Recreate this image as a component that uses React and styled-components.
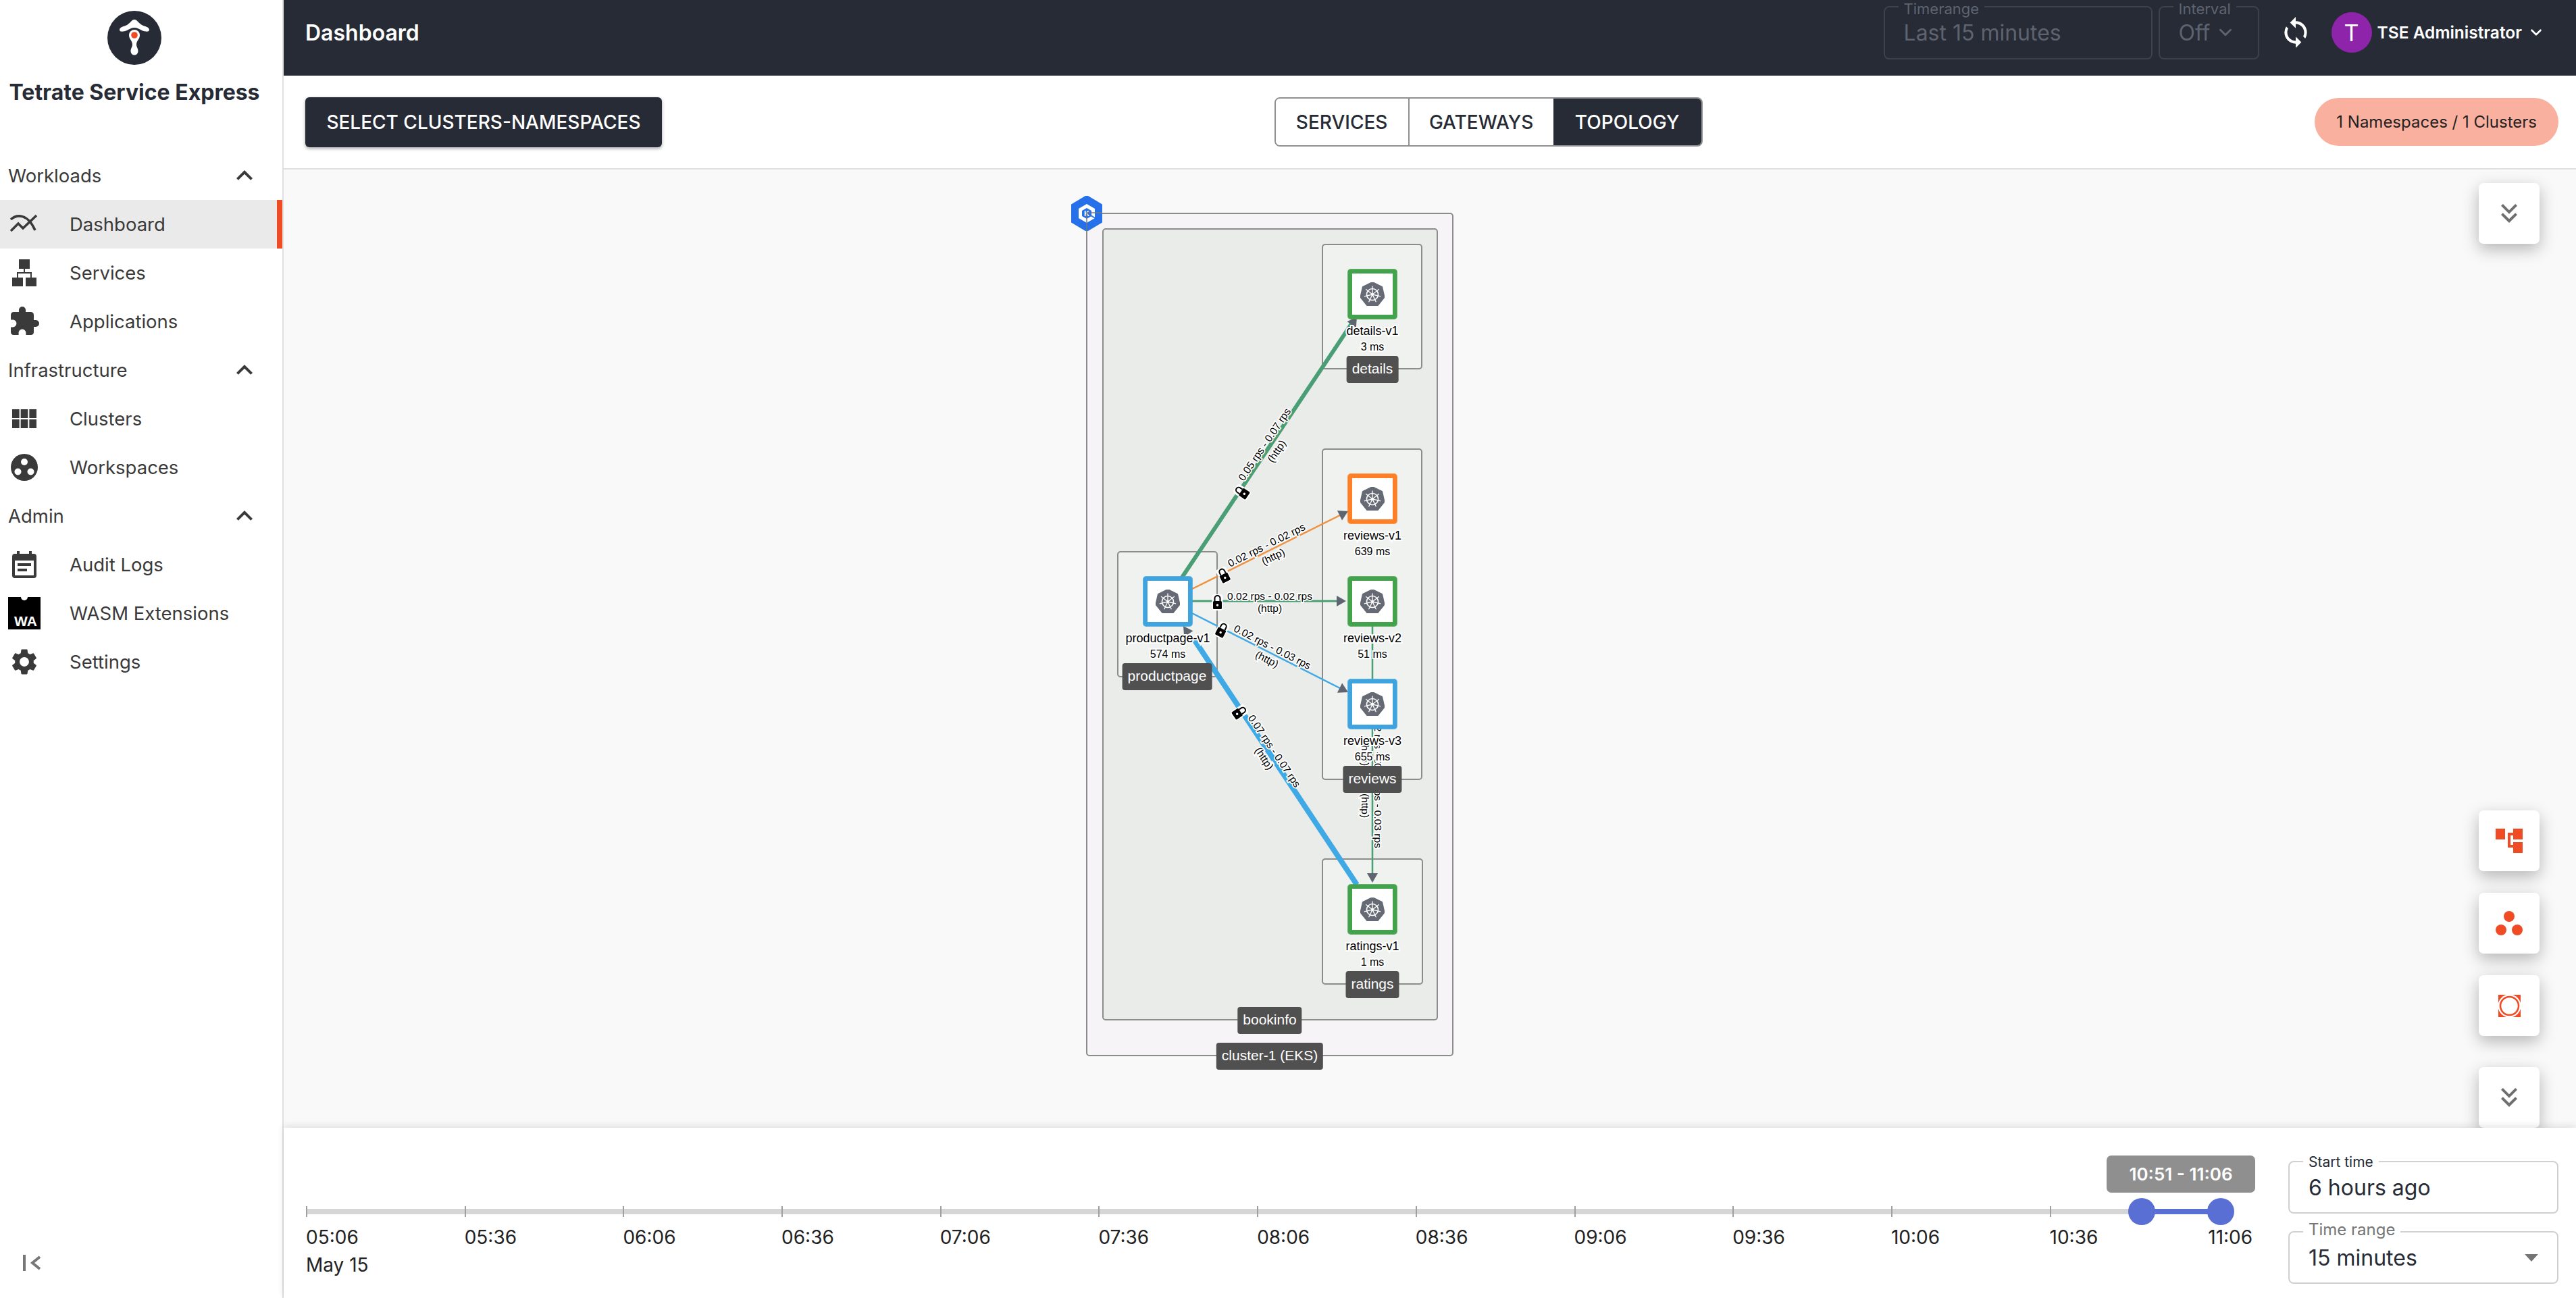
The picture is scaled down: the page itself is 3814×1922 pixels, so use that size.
import styled, { createGlobalStyle } from 'styled-components'
import { MdExpandLess, MdExtension, MdSettings, MdViewModule, MdSync, MdKeyboardDoubleArrowDown } from 'react-icons/md'
import { ChevronDown } from 'lucide-react'

const ORIGIN_X = 1608
const ORIGIN_Y = 315
const TICK_WIDTH = 234.7

const GlobalStyle = createGlobalStyle`
    html, body { margin: 0; padding: 0; background: #fff; }
    * { box-sizing: border-box; }
    body { font-family: Inter, "Liberation Sans", sans-serif; color: #262b35; }
`

//Layout
const Page = styled.div`
    display: grid;
    grid-template-columns: 420px 1fr;
    width: 3814px;
    height: 1922px;
    overflow: hidden;
`

const Main = styled.main`
    display: flex;
    flex-direction: column;
    min-width: 0;
`

//Sidebar
const Sidebar = styled.aside`
    position: relative;
    border-right: 2px solid #e0e0e0;
    background: #fff;
`

const Brand = styled.div`
    display: flex;
    flex-direction: column;
    align-items: center;
    height: 224px;
    padding: 16px 20px 0 0;
`

const BrandName = styled.div`
    margin-top: 21px;
    font-size: 32px;
    font-weight: 700;
    line-height: 40px;
    white-space: nowrap;
`

const GroupTitle = styled.div`
    display: flex;
    align-items: center;
    justify-content: space-between;
    height: 72px;
    padding: 0 32px 0 12px;
    font-size: 27.5px;
    color: #3a3a3a;
`

const NavItem = styled.div`
    display: flex;
    align-items: center;
    height: 72px;
    padding-left: 12px;
    font-size: 27.5px;
    color: #3a3a3a;
    background: ${p => (p.$active ? '#eaeaea' : 'transparent')};
    border-right: 8px solid ${p => (p.$active ? '#ef4b24' : 'transparent')};
`

const NavIcon = styled.span`
    display: flex;
    align-items: center;
    justify-content: center;
    width: 48px;
    margin-right: 43px;
    color: #3a3a3a;
`

const WasmBadge = styled.span`
    position: relative;
    display: flex;
    align-items: flex-end;
    justify-content: center;
    width: 48px;
    height: 48px;
    background: #000;
    color: #fff;
    font-family: "Liberation Sans", sans-serif;
    font-size: 21px;
    font-weight: 700;
    padding: 0 0 1px 4px;
    line-height: 22px;

    &::before {
        content: '';
        position: absolute;
        top: -5px;
        left: 19px;
        width: 10px;
        height: 10px;
        border-radius: 50%;
        background: #fff;
    }
`

const Collapse = styled.div`
    position: absolute;
    left: 34px;
    bottom: 40px;
    display: flex;
`

//Header
const Header = styled.header`
    display: flex;
    align-items: center;
    height: 112px;
    padding: 0 0 16px 32px;
    background: #262b35;
    color: #fff;
`

const PageTitle = styled.h1`
    flex: 1;
    margin: 0;
    font-size: 32px;
    font-weight: 600;
`

const HeaderField = styled.div`
    position: relative;
    display: flex;
    align-items: center;
    gap: 8px;
    width: ${p => p.$width}px;
    height: 79px;
    margin-right: 9px;
    padding: 0 0 0 28px;
    border: 2px solid #3c414c;
    border-radius: 8px;
    color: #5e6370;
    font-size: 32px;
`

const HeaderLegend = styled.span`
    position: absolute;
    top: -9px;
    left: 20px;
    padding: 0 8px;
    background: #262b35;
    font-size: 22px;
    line-height: 22px;
`

const RefreshButton = styled.div`
    display: flex;
    margin: 0 28px 0 20px;
    color: #fff;
`

const Avatar = styled.div`
    display: flex;
    align-items: center;
    justify-content: center;
    width: 60px;
    height: 60px;
    margin-right: 8px;
    border-radius: 50%;
    background: #8e24aa;
    font-size: 34px;
`

const UserName = styled.div`
    display: flex;
    align-items: center;
    gap: 8px;
    margin-right: 46px;
    font-size: 24.5px;
    font-weight: 600;
    white-space: nowrap;
`

//Toolbar
const Toolbar = styled.div`
    display: flex;
    align-items: center;
    justify-content: space-between;
    height: 139px;
    padding: 0 26px 0 32px;
    border-bottom: 2px solid #e0e0e0;
`

const SelectButton = styled.button`
    width: 528px;
    height: 74px;
    padding: 0;
    border: 0;
    border-radius: 6px;
    background: #262b35;
    box-shadow: 0 2px 5px rgba(0, 0, 0, .35);
    color: #fff;
    font: 500 28px Inter, sans-serif;
`

const Tabs = styled.div`
    display: flex;
    height: 73px;
    border: 2px solid #909090;
    border-radius: 8px;
    overflow: hidden;
`

const Tab = styled.div`
    display: flex;
    align-items: center;
    justify-content: center;
    width: ${p => p.$width}px;
    border-left: ${p => (p.$first || p.$active ? 0 : '2px solid #909090')};
    background: ${p => (p.$active ? '#262b35' : '#fff')};
    color: ${p => (p.$active ? '#fff' : '#262b35')};
    font-size: 28px;
    font-weight: 500;
`

const Pill = styled.div`
    display: flex;
    align-items: center;
    height: 71px;
    padding: 0 32px;
    border-radius: 36px;
    background: #f9b09e;
    color: #222;
    font-size: 24px;
    white-space: nowrap;
`

//Topology canvas
const Canvas = styled.section`
    position: relative;
    flex: 1;
    background: #f9f9f9;
    overflow: hidden;
    padding: 64px 0 0 1188px;
`

const Graph = styled.div`
    position: relative;
    width: 544px;
    height: 1249px;
`

const GroupBox = styled.div`
    position: absolute;
    left: ${p => p.$x1 - ORIGIN_X}px;
    top: ${p => p.$y1 - ORIGIN_Y}px;
    width: ${p => p.$x2 - p.$x1}px;
    height: ${p => p.$y2 - p.$y1}px;
    background: ${p => p.$fill};
    border: 2px solid #8c8c8c;
    border-radius: 5px;
`

const EdgeLayer = styled.svg`
    position: absolute;
    inset: 0;
    width: 544px;
    height: 1249px;
    overflow: visible;
`

const EdgeLabel = styled.text`
    font-family: "Liberation Sans", Arial, sans-serif;
    font-size: 15.5px;
    fill: #000;
    stroke: #fff;
    stroke-width: 3.5px;
    paint-order: stroke;
    text-anchor: middle;
    dominant-baseline: central;
`

const Node = styled.div`
    position: absolute;
    left: ${p => p.$cx - ORIGIN_X - 100}px;
    top: ${p => p.$top - ORIGIN_Y}px;
    display: flex;
    flex-direction: column;
    align-items: center;
    width: 200px;
`

const NodeBox = styled.div`
    display: flex;
    align-items: center;
    justify-content: center;
    width: 72px;
    height: 73px;
    margin-bottom: 6px;
    border: 6px solid ${p => p.$color};
    border-radius: 4px;
    background: #fff;
    box-shadow: 0 0 0 1px ${p => p.$color}cc;
`

const NodeText = styled.div`
    height: 24px;
    font-family: "Liberation Sans", Arial, sans-serif;
    font-size: ${p => p.$size}px;
    line-height: 24px;
    color: #000;
    white-space: nowrap;
    -webkit-text-stroke: 4px #fff;
    paint-order: stroke fill;
`

const GroupTag = styled.div`
    position: absolute;
    left: ${p => p.$cx - ORIGIN_X}px;
    top: ${p => p.$top - ORIGIN_Y}px;
    height: 40px;
    padding: 0 8px;
    transform: translateX(-50%);
    border-radius: 4px;
    background: #505050;
    color: #fff;
    font-family: "Liberation Sans", Arial, sans-serif;
    font-size: 21px;
    line-height: 38px;
    white-space: nowrap;
`

const ClusterBadge = styled.svg`
    position: absolute;
    left: -22px;
    top: -25px;
    width: 46px;
    height: 52px;
`

const BadgeLetter = styled.text`
    font-family: "Liberation Sans", Arial, sans-serif;
    font-size: 11px;
    font-weight: 700;
    fill: #fff;
    text-anchor: middle;
`

const FloatButton = styled.div`
    position: absolute;
    left: ${3670 - 420}px;
    top: ${p => p.$top - 251}px;
    display: flex;
    align-items: center;
    justify-content: center;
    width: 90px;
    height: 90px;
    border-radius: 7px;
    background: #fff;
    box-shadow: 0 8px 24px rgba(0, 0, 0, .28);
    color: #6f6f6f;
`

//Time panel
const TimePanel = styled.footer`
    position: relative;
    display: flex;
    height: 252px;
    padding: 49px 26px 0 33px;
    background: #fff;
    box-shadow: 0 -3px 10px rgba(0, 0, 0, .1);
`

const Timeline = styled.div`
    position: relative;
    display: flex;
    align-items: flex-start;
    width: 2935px;
    padding-top: 67px;

    &::before {
        content: '';
        position: absolute;
        left: 0;
        top: 71px;
        width: 2835px;
        height: 8px;
        background: #d6d6d6;
    }
`

const Tick = styled.div`
    position: relative;
    flex: 0 0 ${TICK_WIDTH}px;
    font-size: 28px;
    line-height: 34px;
    color: #222;

    &::before {
        content: '';
        display: block;
        width: 2px;
        height: 16px;
        margin-bottom: 13px;
        background: #a0a0a0;
    }
`

const DateLabel = styled.div`
    margin-top: 7px;
`

const ActiveRange = styled.div`
    position: absolute;
    left: 2718px;
    top: 71px;
    width: 117px;
    height: 8px;
    background: #5a6fd3;
`

const Handle = styled.div`
    position: absolute;
    left: ${p => p.$left}px;
    top: 55px;
    width: 40px;
    height: 40px;
    border-radius: 50%;
    background: #5a6fd3;
`

const RangeTip = styled.div`
    position: absolute;
    left: 2666px;
    top: -8px;
    display: flex;
    align-items: center;
    justify-content: center;
    width: 220px;
    height: 55px;
    border-radius: 7px;
    background: #8f8f8f;
    color: #fff;
    font-size: 26px;
    font-weight: 600;
`

const Fields = styled.div`
    display: flex;
    flex-direction: column;
    gap: 26px;
    width: 400px;
`

const Field = styled.div`
    position: relative;
    display: flex;
    align-items: center;
    justify-content: space-between;
    height: 78px;
    padding: 0 28px 0 28px;
    border: 2px solid #d0d0d0;
    border-radius: 8px;
    font-size: 32px;
    color: #262b35;
`

const FieldLegend = styled.span`
    position: absolute;
    left: 20px;
    top: ${p => (p.$muted ? -17 : -13)}px;
    padding: 0 8px;
    background: #fff;
    font-size: ${p => (p.$muted ? 24 : 21)}px;
    line-height: 26px;
    color: ${p => (p.$muted ? '#757575' : '#262b35')};
`

const Caret = styled.span`
    width: 0;
    height: 0;
    border-left: 10px solid transparent;
    border-right: 10px solid transparent;
    border-top: 11px solid #757575;
`

//Drawn icons
const Logo = () => (
    <svg width="80" height="80" viewBox="0 0 80 80">
        <circle cx="40" cy="40" r="40" fill="#262b35" />
        <path d="M40 13 C44 13 46 18 51 21 C55 23 62 24 62 28 C62 32 56 31 51 29 C47 27 44 25 40 25 C36 25 33 27 29 29 C24 31 18 32 18 28 C18 24 25 23 29 21 C34 18 36 13 40 13 Z" fill="#fff" />
        <path d="M32 36 A8 8 0 0 1 48 36 C48 42 43 44 43 50 C43 54 45.5 55 45.5 60 A5.5 5.5 0 0 1 34.5 60 C34.5 55 37 54 37 50 C37 44 32 42 32 36 Z" fill="#fff" />
        <circle cx="40" cy="36" r="4.8" fill="#ef4b24" />
    </svg>
)

const DashboardIcon = () => (
    <svg width="42" height="30" viewBox="0 0 42 30" fill="none" stroke="#3a3a3a" strokeWidth="3.6">
        <path d="M1 25 L12 14 L19 21 L39 2" />
        <path d="M1 8 C10 0 26 -1 37 24" />
    </svg>
)

const ServicesIcon = () => (
    <svg width="36" height="40" viewBox="0 0 36 40" fill="#3a3a3a">
        <rect x="10" y="0" width="16" height="14" />
        <rect x="0" y="27" width="16" height="13" />
        <rect x="20" y="27" width="16" height="13" />
        <path d="M17 14 h2 v5 h10 v8 h-2 v-6 h-18 v6 h-2 v-8 h10 z" />
    </svg>
)

const WorkspacesIcon = () => (
    <svg width="40" height="40" viewBox="0 0 40 40">
        <circle cx="20" cy="20" r="20" fill="#3a3a3a" />
        <circle cx="20" cy="12" r="5" fill="#fff" />
        <circle cx="10.5" cy="26.5" r="5" fill="#fff" />
        <circle cx="29.5" cy="26.5" r="5" fill="#fff" />
    </svg>
)

const AuditIcon = () => (
    <svg width="36" height="40" viewBox="0 0 36 40">
        <path d="M7 0 h4 v4 h14 v-4 h4 v4 h3 a4 4 0 0 1 4 4 v28 a4 4 0 0 1 -4 4 h-28 a4 4 0 0 1 -4 -4 v-28 a4 4 0 0 1 4 -4 h3 z" fill="#3a3a3a" />
        <rect x="4" y="14" width="28" height="22" fill="#fff" />
        <rect x="8" y="18" width="20" height="4" fill="#3a3a3a" />
        <rect x="8" y="26" width="14" height="4" fill="#3a3a3a" />
    </svg>
)

const CollapseIcon = () => (
    <svg width="26" height="24" viewBox="0 0 26 24" fill="none" stroke="#777" strokeWidth="4">
        <line x1="2" y1="0" x2="2" y2="24" />
        <path d="M25 3 L14 12 L25 21" />
    </svg>
)

const TopologyIcon = () => (
    <svg width="40" height="36" viewBox="0 0 40 36" fill="#ef4b24">
        <rect x="0" y="0" width="14" height="16" />
        <rect x="26" y="0" width="14" height="16" />
        <rect x="26" y="20" width="14" height="16" />
        <path d="M14 6 h12 v4 h-8 v14 h8 v4 h-12 v-18 h-0 z" transform="translate(4 0)" />
    </svg>
)

const TrioIcon = () => (
    <svg width="40" height="36" viewBox="0 0 40 36" fill="#ef4b24">
        <circle cx="20" cy="8" r="8" />
        <circle cx="8" cy="28" r="8" />
        <circle cx="32" cy="28" r="8" />
    </svg>
)

const FitIcon = () => (
    <svg width="33" height="33" viewBox="0 0 33 33">
        <rect width="33" height="33" fill="#ef4b24" />
        <circle cx="16.5" cy="16.5" r="17" fill="#fff" />
        <circle cx="16.5" cy="16.5" r="13.5" fill="#fff" stroke="#ef4b24" strokeWidth="2.6" />
    </svg>
)

const wheelSpokes = [0, 1, 2, 3, 4, 5, 6].map(i => {
    const a = (i * 2 * Math.PI) / 7 - Math.PI / 2
    return { x: Math.cos(a), y: Math.sin(a) }
})

const KubeIcon = () => (
    <svg width="36" height="35" viewBox="-18 -18 36 35">
        <polygon
            points={wheelSpokes.map(s => `${s.x * 18},${s.y * 18}`).join(' ')}
            fill="#656a75"
            stroke="#656a75"
            strokeWidth="2"
            strokeLinejoin="round"
        />
        <circle r="8.5" fill="none" stroke="#fff" strokeWidth="1.6" />
        <circle r="2" fill="#fff" />
        {wheelSpokes.map(s => (
            <line key={s.x} x1="0" y1="0" x2={s.x * 12.5} y2={s.y * 12.5} stroke="#fff" strokeWidth="1.3" />
        ))}
    </svg>
)

const Lock = ({ x, y, angle }) => (
    <g transform={`translate(${x} ${y}) rotate(${angle})`}>
        <rect x="-8" y="-12" width="16" height="24" rx="4" fill="#fff" />
        <path d="M-4 -2 V-6 a4 4 0 0 1 8 0 V-2" fill="none" stroke="#000" strokeWidth="2" />
        <rect x="-6.5" y="-2" width="13" height="12" rx="1.5" fill="#000" />
        <circle cx="0" cy="4" r="1.7" fill="#fff" />
    </g>
)

const Arrow = ({ x, y, angle }) => (
    <polygon points="0,0 -14,-8 -14,8" fill="#5f6570" transform={`translate(${x} ${y}) rotate(${angle})`} />
)

//Data
const navGroups = [
    {
        title: 'Workloads',
        items: [
            { label: 'Dashboard', icon: <DashboardIcon />, active: true },
            { label: 'Services', icon: <ServicesIcon /> },
            { label: 'Applications', icon: <MdExtension size={50} /> },
        ],
    },
    {
        title: 'Infrastructure',
        items: [
            { label: 'Clusters', icon: <MdViewModule size={48} /> },
            { label: 'Workspaces', icon: <WorkspacesIcon /> },
        ],
    },
    {
        title: 'Admin',
        items: [
            { label: 'Audit Logs', icon: <AuditIcon /> },
            { label: 'WASM Extensions', icon: <WasmBadge>WA</WasmBadge> },
            { label: 'Settings', icon: <MdSettings size={46} /> },
        ],
    },
]

const GREEN_EDGE = '#4a9e75'
const BLUE_EDGE = '#3fa9e6'
const ORANGE_EDGE = '#ee9240'

const edges = [
    { from: [2032, 927], to: [2032, 1296], color: GREEN_EDGE, width: 2.5 },
    { from: [1750, 855], to: [2002, 478], color: GREEN_EDGE, width: 6 },
    { from: [1765, 872], to: [1984, 763], color: ORANGE_EDGE, width: 2.5 },
    { from: [1765, 890], to: [1980, 890], color: GREEN_EDGE, width: 3 },
    { from: [1765, 908], to: [1984, 1019], color: BLUE_EDGE, width: 2.5 },
    { from: [2009, 1310], to: [1768, 947], color: BLUE_EDGE, width: 8 },
]

const arrows = [
    { x: 2009, y: 469, angle: -56 },
    { x: 1996, y: 757, angle: -26.5 },
    { x: 1993, y: 890, angle: 0 },
    { x: 1996, y: 1025, angle: 27 },
    { x: 2032, y: 1307, angle: 90 },
    { x: 1752, y: 927, angle: 236 },
]

const edgeLabels = [
    { x: 2040, y: 1116, angle: 90, text: '0.02 rps - 0.03 rps' },
    { x: 2021, y: 1116, angle: 90, text: '(http)' },
    { x: 2040, y: 1193, angle: 90, text: '0.02 rps - 0.03 rps' },
    { x: 2021, y: 1193, angle: 90, text: '(http)' },
    { x: 1872, y: 658, angle: -56, text: '0.05 rps - 0.07 rps' },
    { x: 1890, y: 668, angle: -56, text: '(http)' },
    { x: 1875, y: 807, angle: -26.5, text: '0.02 rps - 0.02 rps' },
    { x: 1885, y: 824, angle: -26.5, text: '(http)' },
    { x: 1880, y: 882, angle: 0, text: '0.02 rps - 0.02 rps' },
    { x: 1880, y: 900, angle: 0, text: '(http)' },
    { x: 1884, y: 958, angle: 27, text: '0.02 rps - 0.03 rps' },
    { x: 1876, y: 976, angle: 27, text: '(http)' },
    { x: 1887, y: 1112, angle: 56, text: '0.07 rps - 0.07 rps' },
    { x: 1872, y: 1123, angle: 56, text: '(http)' },
]

const locks = [
    { x: 1839, y: 729, angle: -56 },
    { x: 1812, y: 852, angle: -26.5 },
    { x: 1802.5, y: 892, angle: 0 },
    { x: 1809, y: 933, angle: 27 },
    { x: 1835, y: 1055, angle: 56 },
]

const groupBoxes = [
    { x1: 1608, y1: 315, x2: 2152, y2: 1564, fill: '#f7f4f8' },
    { x1: 1632, y1: 338, x2: 2129, y2: 1511, fill: '#eaece9' },
    { x1: 1957, y1: 361, x2: 2106, y2: 547, fill: '#f0f2ef' },
    { x1: 1957, y1: 664, x2: 2106, y2: 1155, fill: '#f0f2ef' },
    { x1: 1957, y1: 1271, x2: 2107, y2: 1458, fill: '#f0f2ef' },
    { x1: 1654, y1: 816, x2: 1803, y2: 1003, fill: '#f0f2ef' },
]

const nodes = [
    { name: 'reviews-v2', latency: '51 ms', cx: 2032, top: 854, color: '#43a24c' },
    { name: 'reviews-v3', latency: '655 ms', cx: 2032, top: 1006, color: '#3fa3de' },
    { name: 'details-v1', latency: '3 ms', cx: 2032, top: 399, color: '#43a24c' },
    { name: 'reviews-v1', latency: '639 ms', cx: 2032, top: 702, color: '#ff7f27' },
    { name: 'productpage-v1', latency: '574 ms', cx: 1729, top: 854, color: '#3fa3de' },
    { name: 'ratings-v1', latency: '1 ms', cx: 2032, top: 1310, color: '#43a24c' },
]

const groupTags = [
    { text: 'details', cx: 2032, top: 527 },
    { text: 'productpage', cx: 1728, top: 982 },
    { text: 'reviews', cx: 2032, top: 1134 },
    { text: 'ratings', cx: 2032, top: 1438 },
    { text: 'bookinfo', cx: 1880, top: 1491 },
    { text: 'cluster-1 (EKS)', cx: 1880, top: 1544 },
]

const ticks = ['05:06', '05:36', '06:06', '06:36', '07:06', '07:36', '08:06', '08:36', '09:06', '09:36', '10:06', '10:36', '11:06']

//Component
const App = () => (
    <Page>
        <GlobalStyle />
        <Sidebar>
            <Brand>
                <Logo />
                <BrandName>Tetrate Service Express</BrandName>
            </Brand>
            {navGroups.map(group => (
                <div key={group.title}>
                    <GroupTitle>
                        {group.title}
                        <MdExpandLess size={48} />
                    </GroupTitle>
                    {group.items.map(item => (
                        <NavItem key={item.label} $active={item.active}>
                            <NavIcon>{item.icon}</NavIcon>
                            {item.label}
                        </NavItem>
                    ))}
                </div>
            ))}
            <Collapse><CollapseIcon /></Collapse>
        </Sidebar>
        <Main>
            <Header>
                <PageTitle>Dashboard</PageTitle>
                <HeaderField $width={398}>
                    <HeaderLegend>Timerange</HeaderLegend>
                    Last 15 minutes
                </HeaderField>
                <HeaderField $width={149}>
                    <HeaderLegend>Interval</HeaderLegend>
                    Off <ChevronDown size={30} strokeWidth={2.4} />
                </HeaderField>
                <RefreshButton><MdSync size={50} /></RefreshButton>
                <Avatar>T</Avatar>
                <UserName>TSE Administrator <ChevronDown size={26} strokeWidth={2.4} /></UserName>
            </Header>
            <Toolbar>
                <SelectButton>SELECT CLUSTERS-NAMESPACES</SelectButton>
                <Tabs>
                    <Tab $first $width={196}>SERVICES</Tab>
                    <Tab $width={215}>GATEWAYS</Tab>
                    <Tab $active $width={219}>TOPOLOGY</Tab>
                </Tabs>
                <Pill>1 Namespaces / 1 Clusters</Pill>
            </Toolbar>
            <Canvas>
                <Graph>
                    {groupBoxes.map(box => (
                        <GroupBox key={`${box.x1}-${box.y1}`} $x1={box.x1} $y1={box.y1} $x2={box.x2} $y2={box.y2} $fill={box.fill} />
                    ))}
                    <EdgeLayer viewBox={`${ORIGIN_X} ${ORIGIN_Y} 544 1249`}>
                        {edges.map(edge => (
                            <line
                                key={edge.from.join()}
                                x1={edge.from[0]}
                                y1={edge.from[1]}
                                x2={edge.to[0]}
                                y2={edge.to[1]}
                                stroke={edge.color}
                                strokeWidth={edge.width}
                            />
                        ))}
                        {edgeLabels.map(label => (
                            <EdgeLabel key={`${label.x}-${label.y}`} x={label.x} y={label.y} transform={`rotate(${label.angle} ${label.x} ${label.y})`}>
                                {label.text}
                            </EdgeLabel>
                        ))}
                        {locks.map(lock => <Lock key={lock.x} {...lock} />)}
                        {arrows.map(arrow => <Arrow key={arrow.angle} {...arrow} />)}
                    </EdgeLayer>
                    {nodes.map(node => (
                        <Node key={node.name} $cx={node.cx} $top={node.top}>
                            <NodeBox $color={node.color}><KubeIcon /></NodeBox>
                            <NodeText $size={18}>{node.name}</NodeText>
                            <NodeText $size={16}>{node.latency}</NodeText>
                        </Node>
                    ))}
                    {groupTags.map(tag => (
                        <GroupTag key={tag.text} $cx={tag.cx} $top={tag.top}>{tag.text}</GroupTag>
                    ))}
                    <ClusterBadge viewBox="0 0 46 52">
                        <polygon points="23,0 45,13 45,39 23,52 1,39 1,13" fill="#2671ea" stroke="#2671ea" strokeWidth="2" strokeLinejoin="round" />
                        <polygon points="23,12 35,19 35,33 23,40 11,33 11,19" fill="#fff" />
                        <polygon points="23,18 30,22 30,30 23,34 16,30 16,22" fill="#2671ea" />
                        <line x1="29" y1="29" x2="37" y2="34" stroke="#2671ea" strokeWidth="2" />
                        <BadgeLetter x="23" y="30">K</BadgeLetter>
                        <path d="M46 25 H23 V52" fill="none" stroke="#6f7a8c" strokeWidth="1.5" />
                    </ClusterBadge>
                </Graph>
                <FloatButton $top={271}><MdKeyboardDoubleArrowDown size={48} /></FloatButton>
                <FloatButton $top={1200}><TopologyIcon /></FloatButton>
                <FloatButton $top={1322}><TrioIcon /></FloatButton>
                <FloatButton $top={1444}><FitIcon /></FloatButton>
                <FloatButton $top={1580}><MdKeyboardDoubleArrowDown size={48} /></FloatButton>
            </Canvas>
            <TimePanel>
                <Timeline>
                    {ticks.map((tick, i) => (
                        <Tick key={tick}>
                            {tick}
                            {i === 0 && <DateLabel>May 15</DateLabel>}
                        </Tick>
                    ))}
                    <ActiveRange />
                    <Handle $left={2698} />
                    <Handle $left={2815} />
                    <RangeTip>10:51 - 11:06</RangeTip>
                </Timeline>
                <Fields>
                    <Field>
                        <FieldLegend>Start time</FieldLegend>
                        6 hours ago
                    </Field>
                    <Field>
                        <FieldLegend $muted>Time range</FieldLegend>
                        15 minutes
                        <Caret />
                    </Field>
                </Fields>
            </TimePanel>
        </Main>
    </Page>
)

export default App
